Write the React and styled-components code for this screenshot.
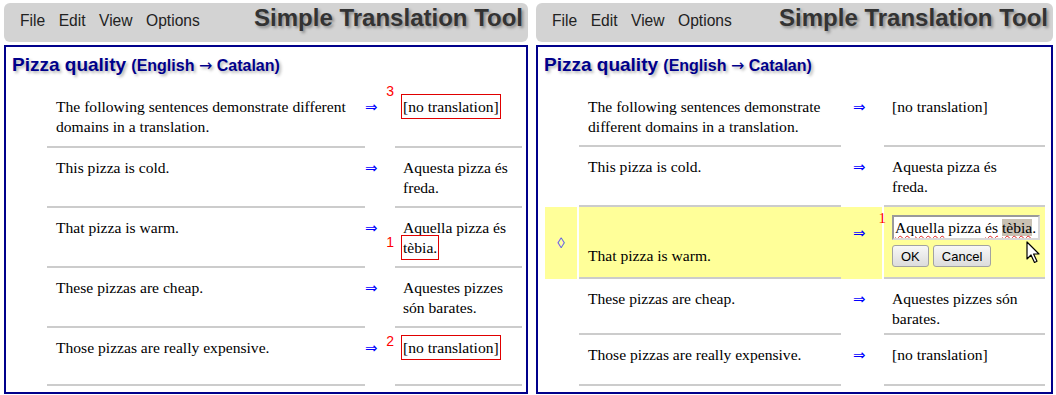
import React from 'react';
import styled, { createGlobalStyle } from 'styled-components';

const GlobalStyle = createGlobalStyle`
  body {
    margin: 0;
    background: #fff;
  }
`;

const Page = styled.div`
  display: flex;
  gap: 8px;
  padding: 3px 0 0 4px;
`;

const Panel = styled.section`
  display: flex;
  flex-direction: column;
  gap: 3px;
  width: ${({ $w }) => $w}px;
`;

const Header = styled.header`
  height: 39px;
  box-sizing: border-box;
  display: flex;
  align-items: baseline;
  justify-content: space-between;
  padding: 3px 5px 0 16px;
  background: #d3d3d3;
  border-radius: 6px;
`;

const Menu = styled.nav`
  display: flex;
  gap: 13.5px;
  font: 15.6px/24px 'Liberation Sans', Arial, sans-serif;
  color: #222;
`;

const Title = styled.h1`
  margin: 0;
  font: bold 24px/24px 'Liberation Sans', Arial, sans-serif;
  color: #333;
  text-shadow: 2px 2px 3px #8a8a8a;
`;

const Box = styled.div`
  flex: 0 0 349px;
  box-sizing: border-box;
  border: 2px solid #00008b;
  overflow: hidden;
`;

const Heading = styled.h2`
  margin: 0 0 10px;
  padding: 7px 0 0 6px;
  font: bold 19px/22px 'Liberation Sans', Arial, sans-serif;
  color: #00008b;
  text-shadow: 2px 2px 3px rgba(0, 0, 0, 0.3);
`;

const Lang = styled.span`
  font-size: 16px;
`;

const LangArrow = styled.span`
  font: normal 16px 'DejaVu Sans', sans-serif;
`;

const Table = styled.div`
  margin-left: 7px;
  font: 15.6px/20px 'Liberation Serif', 'Times New Roman', serif;
  color: #000;
`;

const Row = styled.div`
  display: grid;
  grid-template-columns: ${({ $cols }) => $cols};
  height: ${({ $h }) => $h}px;
`;

const yellow = ({ $active }) => ($active ? '#ffff99' : 'transparent');

const Marker = styled.div`
  margin-right: 2px;
  background: ${yellow};
  display: flex;
  align-items: center;
  justify-content: center;
  color: #5050f0;
  font-size: 15px;
`;

const Source = styled.div`
  box-sizing: border-box;
  border-bottom: 2px solid #cccccc;
  background: ${yellow};
  padding: 10px 0 0 9px;
  ${({ $active }) =>
    $active &&
    `
    display: flex;
    align-items: flex-end;
    padding-bottom: 11px;
  `}
`;

const Arrow = styled.div`
  margin-right: 2px;
  background: ${yellow};
  padding: ${({ $active }) => ($active ? 16 : 10)}px 0 0 ${({ $pad }) => $pad}px;
  color: #0000ff;
  font: 15px/20px 'DejaVu Sans', sans-serif;
`;

const Trans = styled.div`
  box-sizing: border-box;
  border-bottom: 2px solid #cccccc;
  background: ${yellow};
  padding: ${({ $active }) => ($active ? 8 : 10)}px ${({ $padR }) => $padR}px 0 8px;
`;

const Mark = styled.span`
  position: relative;
  border: 1px solid #e00000;
  padding: 3px 1px;
  margin: 0 -2px;
`;

const Num = styled.span`
  position: absolute;
  right: calc(100% + ${({ $gap }) => $gap}px);
  top: ${({ $top }) => $top}px;
  color: #ff0000;
  font: ${({ $serif }) =>
    $serif
      ? "15px/16px 'Liberation Serif', serif"
      : "14px/16px 'Liberation Sans', Arial, sans-serif"};
  white-space: nowrap;
`;

const EditWrap = styled.div`
  position: relative;
  display: flex;
  flex-direction: column;
  align-items: flex-start;
  gap: 5px;
`;

const FakeInput = styled.div`
  width: 148px;
  height: 25px;
  box-sizing: border-box;
  border: 2px solid;
  border-color: #9a9a9a #d8d8d8 #d8d8d8 #9a9a9a;
  background: #fff;
  padding: 0 1px 0 1px;
  line-height: 21px;
  white-space: nowrap;
  overflow: hidden;
`;

const Spell = styled.span`
  text-decoration: underline wavy #e02020;
  text-decoration-thickness: 1px;
  text-underline-offset: 2px;
  background: ${({ $sel }) => ($sel ? '#c9c1b3' : 'transparent')};
`;

const Buttons = styled.div`
  display: flex;
  gap: 4px;
`;

const Btn = styled.button`
  height: 22px;
  padding: 0 8px;
  font: 13px 'Liberation Sans', Arial, sans-serif;
  color: #000;
  border: 1px solid #a2a2a2;
  border-radius: 3px;
  background: linear-gradient(#f8f8f8, #dcdcdc);
`;

const Cursor = styled.svg`
  position: absolute;
  left: 134px;
  top: 26px;
`;

function Editor() {
  return (
    <EditWrap>
      <Num $serif $gap={6} $top={-5}>1</Num>
      <FakeInput>
        <Spell>Aquella</Spell> pizza <Spell>és</Spell>{' '}
        <Spell $sel>tèbia</Spell>.
      </FakeInput>
      <Buttons>
        <Btn type="button">OK</Btn>
        <Btn type="button">Cancel</Btn>
      </Buttons>
      <Cursor width="15" height="24" viewBox="0 0 15 24">
        <path
          d="M1 1 L1 18 L5 14 L8.5 21.5 L11 20.3 L7.6 13 L13 13 Z"
          fill="#fff"
          stroke="#000"
          strokeWidth="1.2"
          strokeLinejoin="round"
        />
      </Cursor>
    </EditWrap>
  );
}

const src = [
  'The following sentences demonstrate different domains in a translation.',
  'This pizza is cold.',
  'That pizza is warm.',
  'These pizzas are cheap.',
  'Those pizzas are really expensive.',
];

const leftPanel = {
  w: 524,
  cols: '34px 318px 30px 127px',
  arrowPad: 0,
  padR: 4,
  rows: [
    { h: 61, tr: <Mark>[no translation]<Num $gap={8} $top={-12}>3</Num></Mark> },
    { h: 60, tr: 'Aquesta pizza és freda.' },
    { h: 60, tr: <>Aquella pizza és <Mark>tèbia.<Num $gap={8} $top={-2}>1</Num></Mark></> },
    { h: 60, tr: 'Aquestes pizzes són barates.' },
    { h: 58, tr: <Mark>[no translation]<Num $gap={8} $top={-3}>2</Num></Mark> },
  ],
};

const rightPanel = {
  w: 517,
  cols: '34px 262px 43px 161px',
  arrowPad: 12,
  padR: 20,
  rows: [
    { h: 60, tr: '[no translation]' },
    { h: 60, tr: 'Aquesta pizza és freda.' },
    { h: 72, tr: <Editor />, active: true },
    { h: 56, tr: 'Aquestes pizzes són barates.' },
    { h: 51, tr: '[no translation]' },
  ],
};

function ToolPanel({ config }) {
  return (
    <Panel $w={config.w}>
      <Header>
        <Menu>
          <span>File</span>
          <span>Edit</span>
          <span>View</span>
          <span>Options</span>
        </Menu>
        <Title>Simple Translation Tool</Title>
      </Header>
      <Box>
        <Heading>
          Pizza quality <Lang>(English <LangArrow>→</LangArrow> Catalan)</Lang>
        </Heading>
        <Table>
          {config.rows.map((row, i) => (
            <Row key={i} $cols={config.cols} $h={row.h}>
              <Marker $active={row.active}>{row.active ? '◊' : ''}</Marker>
              <Source $active={row.active}>
                <span>{src[i]}</span>
              </Source>
              <Arrow $active={row.active} $pad={config.arrowPad}>⇒</Arrow>
              <Trans $active={row.active} $padR={config.padR}>{row.tr}</Trans>
            </Row>
          ))}
        </Table>
      </Box>
    </Panel>
  );
}

export default function App() {
  return (
    <>
      <GlobalStyle />
      <Page>
        <ToolPanel config={leftPanel} />
        <ToolPanel config={rightPanel} />
      </Page>
    </>
  );
}
